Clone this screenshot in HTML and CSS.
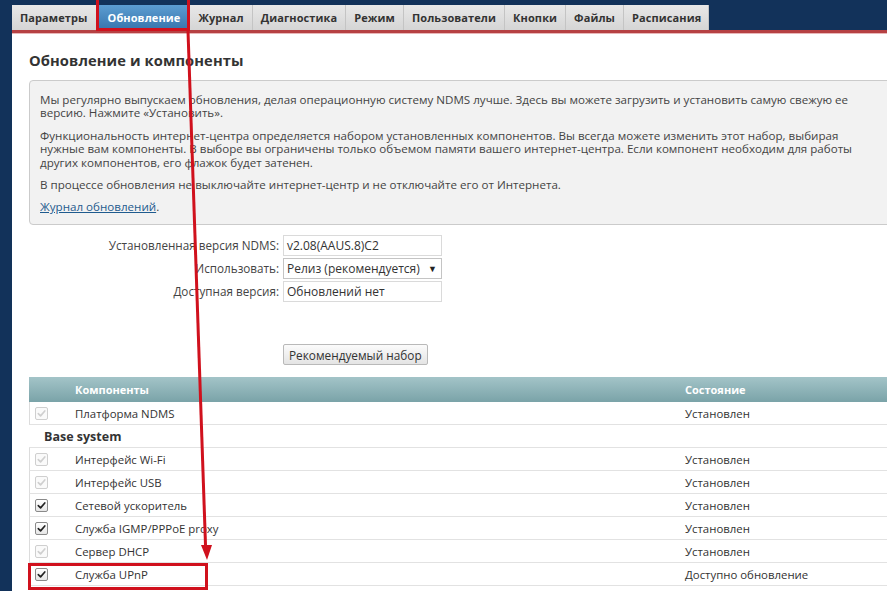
FILE: index.html
```html
<!DOCTYPE html>
<html lang="ru">
<head>
<meta charset="utf-8">
<title>Обновление и компоненты</title>
<link rel="stylesheet" href="styles.css">
</head>
<body>
<div class="page">
  <nav class="tabs">
    <div class="tab">Параметры</div>
    <div class="tab active">Обновление</div>
    <div class="tab">Журнал</div>
    <div class="tab">Диагностика</div>
    <div class="tab">Режим</div>
    <div class="tab">Пользователи</div>
    <div class="tab">Кнопки</div>
    <div class="tab">Файлы</div>
    <div class="tab">Расписания</div>
  </nav>
  <div class="redline"></div>
  <main class="content">
    <h1 class="title">Обновление и компоненты</h1>
    <div class="info">
      <p>Мы регулярно выпускаем обновления, делая операционную систему NDMS лучше. Здесь вы можете загрузить и установить самую свежую ее<br>версию. Нажмите «Установить».</p>
      <p>Функциональность интернет-центра определяется набором установленных компонентов. Вы всегда можете изменить этот набор, выбирая<br>нужные вам компоненты. В выборе вы ограничены только объемом памяти вашего интернет-центра. Если компонент необходим для работы<br>других компонентов, его флажок будет затенен.</p>
      <p>В процессе обновления не выключайте интернет-центр и не отключайте его от Интернета.</p>
      <p><a href="#" class="link">Журнал обновлений</a>.</p>
    </div>
    <div class="form">
      <label class="lbl">Установленная версия NDMS:</label>
      <div class="field">v2.08(AAUS.8)C2</div>
      <label class="lbl">Использовать:</label>
      <div class="field select">Релиз (рекомендуется)<span class="arrow">▼</span></div>
      <label class="lbl">Доступная версия:</label>
      <div class="field">Обновлений нет</div>
    </div>
    <div class="btnrow"><button class="btn">Рекомендуемый набор</button></div>
    <div class="table">
      <div class="thead">
        <div class="c-chk"></div>
        <div class="c-name">Компоненты</div>
        <div class="c-state">Состояние</div>
      </div>
      <div class="row">
        <div class="c-chk"><span class="cb dis"><svg viewBox="0 0 12 12"><path d="M2.5 6.2 L5 8.6 L9.6 3.2"/></svg></span></div>
        <div class="c-name">Платформа NDMS</div>
        <div class="c-state">Установлен</div>
      </div>
      <div class="row group"><div class="gname">Base system</div></div>
      <div class="row">
        <div class="c-chk"><span class="cb dis"><svg viewBox="0 0 12 12"><path d="M2.5 6.2 L5 8.6 L9.6 3.2"/></svg></span></div>
        <div class="c-name">Интерфейс Wi-Fi</div>
        <div class="c-state">Установлен</div>
      </div>
      <div class="row">
        <div class="c-chk"><span class="cb dis"><svg viewBox="0 0 12 12"><path d="M2.5 6.2 L5 8.6 L9.6 3.2"/></svg></span></div>
        <div class="c-name">Интерфейс USB</div>
        <div class="c-state">Установлен</div>
      </div>
      <div class="row">
        <div class="c-chk"><span class="cb on"><svg viewBox="0 0 12 12"><path d="M2.5 6.2 L5 8.6 L9.6 3.2"/></svg></span></div>
        <div class="c-name">Сетевой ускоритель</div>
        <div class="c-state">Установлен</div>
      </div>
      <div class="row">
        <div class="c-chk"><span class="cb on"><svg viewBox="0 0 12 12"><path d="M2.5 6.2 L5 8.6 L9.6 3.2"/></svg></span></div>
        <div class="c-name">Служба IGMP/PPPoE proxy</div>
        <div class="c-state">Установлен</div>
      </div>
      <div class="row">
        <div class="c-chk"><span class="cb dis"><svg viewBox="0 0 12 12"><path d="M2.5 6.2 L5 8.6 L9.6 3.2"/></svg></span></div>
        <div class="c-name">Сервер DHCP</div>
        <div class="c-state">Установлен</div>
      </div>
      <div class="row">
        <div class="c-chk"><span class="cb on"><svg viewBox="0 0 12 12"><path d="M2.5 6.2 L5 8.6 L9.6 3.2"/></svg></span></div>
        <div class="c-name">Служба UPnP</div>
        <div class="c-state">Доступно обновление</div>
      </div>
    </div>
  </main>
</div>
<svg class="annot" viewBox="0 0 887 591" width="887" height="591">
  <rect x="97.5" y="-2" width="91" height="31.5" fill="none" stroke="#d0111d" stroke-width="3"/>
  <line x1="188" y1="31" x2="205.6" y2="548" stroke="#d0111d" stroke-width="3"/>
  <polygon points="201,545 212,545 207,560" fill="#d0111d"/>
  <rect x="29.5" y="564.5" width="177" height="24" fill="none" stroke="#d0111d" stroke-width="3"/>
</svg>
</body>
</html>
```

FILE: styles.css
```css
html, body {
  margin: 0;
  padding: 0;
  width: 887px;
  height: 591px;
  overflow: hidden;
}
body {
  background: #12325a;
  font-family: "Open Sans", "Liberation Sans", sans-serif;
  color: #444;
  position: relative;
}
.page {
  padding: 5px 0 0 12px;
}
.tabs {
  display: flex;
  height: 25px;
}
.tab {
  background: linear-gradient(#e8e8e8, #d5d5d5);
  border-right: 1px solid #c4c4c4;
  color: #333;
  font-weight: 700;
  font-size: 11px;
  line-height: 25px;
  padding: 0 8px;
  letter-spacing: 0.1px;
}
.tab.active {
  background: linear-gradient(#5c9dd2, #3775ac);
  color: #fff;
  padding: 0 9px 0 11px;
}
.tab:last-child {
  padding: 0 7px 0 8px;
}
.redline {
  height: 3px;
  background: #b64143;
  border-bottom: 1px solid #e9b7b8;
}
.content {
  background: #fff;
  padding: 0 0 0 17px;
  height: 558px;
  overflow: hidden;
}
.title {
  margin: 16px 0 0;
  font-size: 14.7px;
  line-height: 20px;
  font-weight: 700;
  color: #333;
  letter-spacing: 0.1px;
}
.info {
  margin-top: 10px;
  width: 900px;
  background: #f2f2f2;
  border: 1px solid #cbcbcb;
  border-radius: 4px;
  padding: 12px 10px 10px;
  font-size: 11.6px;
  line-height: 13.4px;
  color: #444;
}
.info p {
  margin: 0 0 9px;
}
.info p:last-child {
  margin-bottom: 0;
}
.link {
  color: #1f5b8e;
  text-decoration: underline;
}
.form {
  margin-top: 10px;
  display: grid;
  grid-template-columns: 250px 159px;
  column-gap: 4px;
  row-gap: 2px;
  font-size: 11.7px;
}
.lbl {
  text-align: right;
  line-height: 20px;
  color: #444;
}
.field {
  height: 19px;
  border: 1px solid #dadada;
  line-height: 19px;
  padding: 0 3px;
  color: #333;
  background: #fff;
  position: relative;
  font-size: 12px;
}
.field.select {
  border-color: #c4c4c4;
}
.arrow {
  position: absolute;
  right: 4px;
  top: 0;
  font-size: 9px;
  color: #222;
}
.btnrow {
  margin-top: 41px;
  padding-left: 254px;
}
.btn {
  font-family: inherit;
  font-size: 11.8px;
  color: #333;
  height: 21px;
  padding: 0 5px;
  border: 1px solid #b9b9b9;
  border-radius: 2px;
  background: linear-gradient(#fbfbfb, #e4e4e4);
}
.table {
  margin-top: 12px;
  width: 880px;
  font-size: 11.4px;
  color: #333;
}
.thead {
  display: flex;
  height: 25px;
  align-items: center;
  background: linear-gradient(#a3c4c8, #7aa3a8);
  color: #fff;
  font-weight: 700;
  font-size: 11px;
}
.row {
  display: flex;
  align-items: center;
  height: 22px;
  border-bottom: 1px solid #e2e2e2;
  border-left: 1px solid #dcdcdc;
}
.c-chk {
  width: 45px;
  display: flex;
  padding-left: 5px;
  box-sizing: border-box;
}
.thead .c-chk {
  width: 46px;
}
.c-name {
  width: 610px;
}
.c-state {
  flex: 1;
}
.group {
  border-left: none;
}
.gname {
  padding-left: 15px;
  font-weight: 700;
  font-size: 12.5px;
  color: #333;
}
.cb {
  width: 11px;
  height: 11px;
  border: 1px solid #cfcfcf;
  border-radius: 2px;
  background: #fafafa;
  display: block;
}
.cb svg {
  display: block;
  width: 11px;
  height: 11px;
  fill: none;
  stroke-width: 1.8;
  stroke-linecap: round;
  stroke-linejoin: round;
}
.cb.dis svg {
  stroke: #cfcfcf;
}
.cb.on {
  border-color: #8a8a8a;
  background: linear-gradient(#fff, #e6e6e6);
}
.cb.on svg {
  stroke: #222;
}
.annot {
  position: absolute;
  left: 0;
  top: 0;
  pointer-events: none;
}
```
